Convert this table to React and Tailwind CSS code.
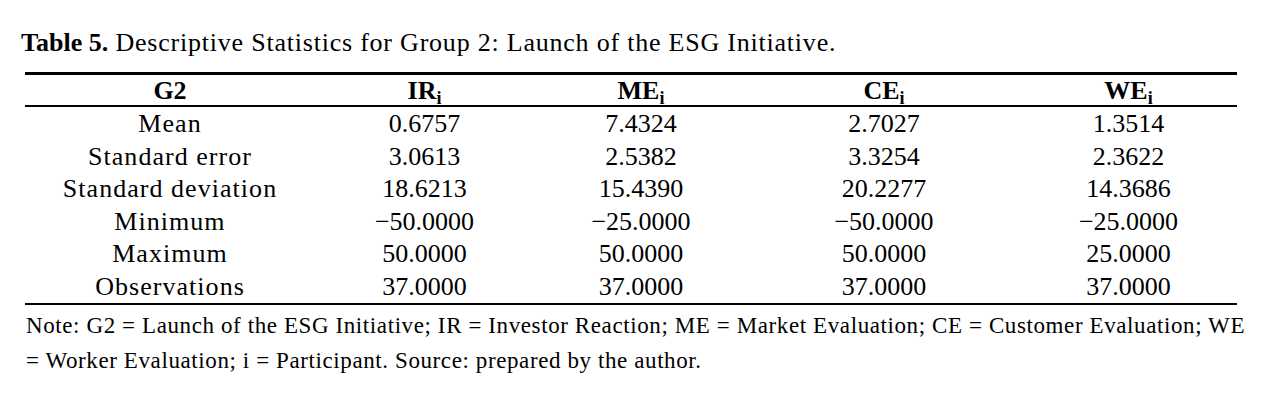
import React from 'react';

const columns = ['G2', 'IR', 'ME', 'CE', 'WE'];

const rows = [
  ['Mean', '0.6757', '7.4324', '2.7027', '1.3514'],
  ['Standard error', '3.0613', '2.5382', '3.3254', '2.3622'],
  ['Standard deviation', '18.6213', '15.4390', '20.2277', '14.3686'],
  ['Minimum', '\u221250.0000', '\u221225.0000', '\u221250.0000', '\u221225.0000'],
  ['Maximum', '50.0000', '50.0000', '50.0000', '25.0000'],
  ['Observations', '37.0000', '37.0000', '37.0000', '37.0000'],
];

const App = () => {
  return (
    <div className="w-[1270px] h-[407px] bg-white text-black pl-[21px] pt-[27px] font-['Liberation_Serif',serif]">
      <p className="text-[26px] leading-[32px] tracking-[0.03em] whitespace-nowrap">
        <span className="font-bold tracking-normal">Table 5.</span> Descriptive Statistics for Group 2: Launch of the ESG Initiative.
      </p>

      <div className="ml-[4px] mt-[13px] w-[1212px] border-t-[3px] border-b-[2px] border-black text-[26px]">
        {/* Header */}
        <div className="grid grid-cols-[290px_219px_214px_272px_217px] h-[32px] items-center border-b-[2px] border-black font-bold leading-[32px]">
          {columns.map((col, i) => (
            <div key={col} className="text-center">
              {col}
              {i > 0 && <sub className="text-[18px]">i</sub>}
            </div>
          ))}
        </div>

        {/* Body */}
        {rows.map((row) => (
          <div
            key={row[0]}
            className="grid grid-cols-[290px_219px_214px_272px_217px] h-[32.6px] items-center leading-[32px] pt-[1px]"
          >
            {row.map((cell, i) => (
              <div key={i} className={i === 0 ? 'text-center tracking-[0.04em]' : 'text-center'}>
                {cell}
              </div>
            ))}
          </div>
        ))}
      </div>

      <p className="mt-[3px] ml-[5px] text-[23px] leading-[35.5px] tracking-[0.6px] whitespace-nowrap">
        Note: G2 = Launch of the ESG Initiative; IR = Investor Reaction; ME = Market Evaluation; CE = Customer Evaluation; WE
        <br />= Worker Evaluation; i = Participant. Source: prepared by the author.
      </p>
    </div>
  );
};

export default App;
